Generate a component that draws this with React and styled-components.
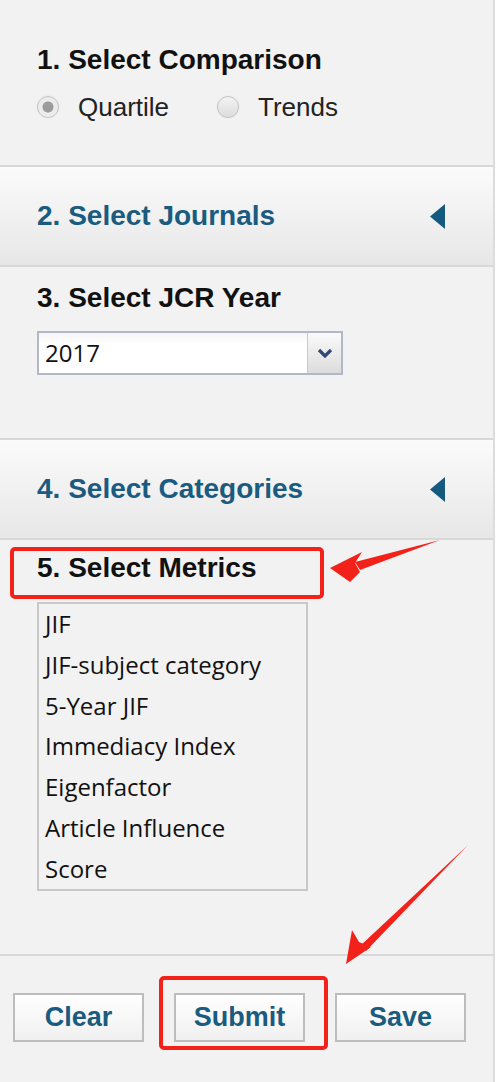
import React, { useState } from 'react';
import styled, { createGlobalStyle } from 'styled-components';

const GlobalStyle = createGlobalStyle`
  html, body {
    margin: 0;
    padding: 0;
    background: #ffffff;
  }
  body {
    font-family: "Liberation Sans", Arial, sans-serif;
  }
`;

const Panel = styled.div`
  position: relative;
  width: 493px;
  height: 1082px;
  background: #f2f2f2;
  border-right: 2px solid #dcdcdc;
  display: flex;
  flex-direction: column;
  overflow: hidden;
`;

const Section = styled.div`
  height: ${(p) => p.$height}px;
  flex-shrink: 0;
  padding: ${(p) => p.$pad}px 0 0 37px;
  box-sizing: border-box;
  border-bottom: 2px solid #d8d8d8;
  display: flex;
  flex-direction: column;
  align-items: flex-start;
`;

const Title = styled.h2`
  margin: 0;
  font-size: 28px;
  line-height: 30px;
  font-weight: bold;
  color: #111;
`;

const RadioRow = styled.div`
  display: flex;
  align-items: center;
  margin-top: 17px;
  gap: 48px;
`;

const RadioLabel = styled.label`
  display: flex;
  align-items: center;
  gap: 19px;
  font-size: 26px;
  line-height: 30px;
  color: #222;
`;

const RadioDot = styled.span`
  width: 22px;
  height: 22px;
  border-radius: 50%;
  box-sizing: border-box;
  border: 1px solid #c4c4c4;
  background: ${(p) =>
    p.$checked
      ? 'radial-gradient(circle, #9c9c9c 0 5px, #ececec 6px)'
      : 'linear-gradient(#f4f4f4, #dcdcdc)'};
  box-shadow: 0 0 0 1px #ececec;
`;

const AccordionHeader = styled.div`
  height: 100px;
  flex-shrink: 0;
  border-bottom: 2px solid #d8d8d8;
  background: linear-gradient(#fbfbfb, #e7e7e7);
  display: flex;
  align-items: center;
  justify-content: space-between;
  padding: 0 48px 0 37px;
  box-sizing: border-box;
  cursor: pointer;
`;

const HeaderText = styled.span`
  font-size: 28px;
  font-weight: bold;
  color: #1a5b7f;
`;

const SelectBox = styled.div`
  margin-top: 18px;
  width: 306px;
  height: 44px;
  box-sizing: border-box;
  border: 2px solid #b3b8c8;
  background: linear-gradient(#f6f6f6, #ffffff 30%);
  display: flex;
`;

const SelectValue = styled.span`
  flex: 1;
  padding-left: 6px;
  font-family: "Open Sans", "DejaVu Sans", sans-serif;
  font-size: 24px;
  line-height: 40px;
  color: #111;
`;

const SelectButton = styled.span`
  width: 33px;
  border-left: 1px solid #c6c9d3;
  background: linear-gradient(#fafafa, #dcdcdc);
  display: flex;
  align-items: center;
  justify-content: center;
`;

const ListBox = styled.div`
  margin-top: 19px;
  width: 271px;
  height: 289px;
  box-sizing: border-box;
  border: 2px solid #c8c8c8;
  padding: 0 0 0 6px;
  display: flex;
  flex-direction: column;
`;

const ListItem = styled.div`
  font-family: "Open Sans", "DejaVu Sans", sans-serif;
  font-size: 24px;
  line-height: 40.8px;
  color: #111;
  white-space: nowrap;
`;

const ButtonRow = styled.div`
  display: flex;
  gap: 30px;
  padding: 37px 0 0 13px;
`;

const Button = styled.button`
  width: 131px;
  height: 49px;
  box-sizing: border-box;
  border: 2px solid #bdbdbd;
  background: linear-gradient(#ffffff, #f0f0f0);
  font-family: "Liberation Sans", Arial, sans-serif;
  font-size: 27px;
  font-weight: bold;
  color: #1a5b7f;
  padding: 0;
`;

const Highlight = styled.div`
  position: absolute;
  left: ${(p) => p.$x}px;
  top: ${(p) => p.$y}px;
  width: ${(p) => p.$w}px;
  height: ${(p) => p.$h}px;
  box-sizing: border-box;
  border: 4px solid #f2221b;
  border-radius: 5px;
  pointer-events: none;
`;

const ArrowLayer = styled.svg`
  position: absolute;
  left: 0;
  top: 0;
  pointer-events: none;
`;

const LeftTriangle = () => (
  <svg width="15" height="25" viewBox="0 0 15 25">
    <polygon points="15,0 15,25 0,12.5" fill="#145a80" />
  </svg>
);

const Chevron = () => (
  <svg width="16" height="10" viewBox="0 0 16 10">
    <path d="M2 2 L8 8 L14 2" fill="none" stroke="#2f4a74" strokeWidth="3.2" />
  </svg>
);

const metrics = [
  'JIF',
  'JIF-subject category',
  '5-Year JIF',
  'Immediacy Index',
  'Eigenfactor',
  'Article Influence',
  'Score',
];

export default function App() {
  const [mode, setMode] = useState('quartile');

  return (
    <Panel>
      <GlobalStyle />
      <Section $height={167} $pad={45}>
        <Title>1. Select Comparison</Title>
        <RadioRow>
          <RadioLabel onClick={() => setMode('quartile')}>
            <RadioDot $checked={mode === 'quartile'} />
            Quartile
          </RadioLabel>
          <RadioLabel onClick={() => setMode('trends')}>
            <RadioDot $checked={mode === 'trends'} />
            Trends
          </RadioLabel>
        </RadioRow>
      </Section>

      <AccordionHeader>
        <HeaderText>2. Select Journals</HeaderText>
        <LeftTriangle />
      </AccordionHeader>

      <Section $height={173} $pad={16}>
        <Title>3. Select JCR Year</Title>
        <SelectBox>
          <SelectValue>2017</SelectValue>
          <SelectButton>
            <Chevron />
          </SelectButton>
        </SelectBox>
      </Section>

      <AccordionHeader>
        <HeaderText>4. Select Categories</HeaderText>
        <LeftTriangle />
      </AccordionHeader>

      <Section $height={416} $pad={13}>
        <Title>5. Select Metrics</Title>
        <ListBox>
          {metrics.map((m) => (
            <ListItem key={m}>{m}</ListItem>
          ))}
        </ListBox>
      </Section>

      <ButtonRow>
        <Button>Clear</Button>
        <Button>Submit</Button>
        <Button>Save</Button>
      </ButtonRow>

      <Highlight $x={10} $y={547} $w={314} $h={52} />
      <Highlight $x={159} $y={976} $w={169} $h={74} />

      <ArrowLayer width="500" height="1082" viewBox="0 0 500 1082">
        <polygon points="440,540 355,562 360,570" fill="#f2221b" />
        <polygon points="330,568 362,552 355,563 360,572 350,582" fill="#f2221b" />
        <polygon points="468,845 360,946 366,951" fill="#f2221b" />
        <polygon points="346,964 352,930 359,942 371,947" fill="#f2221b" />
      </ArrowLayer>
    </Panel>
  );
}
